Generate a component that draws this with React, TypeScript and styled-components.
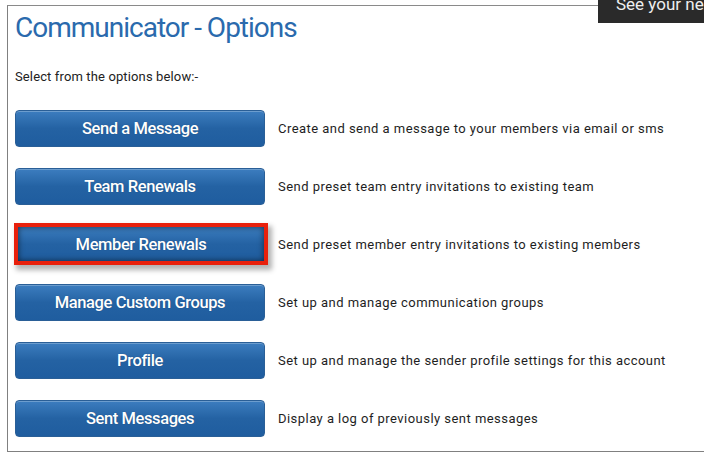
import styled, { createGlobalStyle, css } from "styled-components";

const GlobalStyle = createGlobalStyle`
    html, body { margin: 0; padding: 0; background: #fff; }
    body { font-family: Roboto, "Liberation Sans", sans-serif; color: #222; }
`

const Page = styled.div`
    position: relative; width: 704px; height: 459px; overflow: hidden;
`
const Frame = styled.div`
    margin: 5px 0 0 7px; width: 690px; height: 445px;
    border: 1px solid #808080; border-top-color: #8a8a8a;
    padding: 0 0 0 7px; box-sizing: content-box;
`
const Title = styled.h1`
    margin: 0; padding-top: 5px; font-size: 28px; font-weight: 400; line-height: 34px;
    color: #2a6aad; letter-spacing: -1px;
`
const Intro = styled.p`
    margin: 24px 0 0; font-size: 13px; line-height: 16px; color: #222; letter-spacing: 0.13px;
`
const OptionList = styled.ul`
    list-style: none; margin: 25px 0 0; padding: 0;
    display: flex; flex-direction: column; gap: 21px;
`
const Row = styled.li`
    display: flex; align-items: center; gap: 13px;
`
const Button = styled.button<{ $active?: boolean }>`
    width: 250px; height: 37px; border-radius: 4px; border: 1px solid #2a5f97;
    background: linear-gradient(#3c7dbf, #2462a3 50%, #1f5d9f);
    color: #fff; font-family: inherit; font-size: 16.5px; font-weight: 500; letter-spacing: -0.4px;
    text-shadow: 0 0 1px rgba(0,0,0,.3); cursor: pointer; padding: 0; box-sizing: border-box;
    box-shadow: inset 0 1px 0 rgba(255,255,255,.25);
    ${({ $active }) => $active && css`
        width: 254px; height: 42px; margin: -3px 0 -2px -1px;
        border: 4px solid #e8200c; border-radius: 0;
        box-shadow: inset 0 0 6px rgba(0,0,0,.6), 3px 4px 5px 1px rgba(0,0,0,.3);
    `}
`
const Desc = styled.span<{ $shift?: boolean }>`
    font-size: 13px; color: #1e1e1e; letter-spacing: 0.46px;
    ${({ $shift }) => $shift && css`margin-left: -3px;`}
`
const Tip = styled.div`
    position: absolute; top: -4px; left: 598px; width: 106px; height: 27px;
    background: #2a2a2a; color: #eee; font-size: 17px; line-height: 17px;
    padding-left: 18px; box-sizing: border-box; white-space: nowrap; overflow: hidden;
`

const options = [
    { label: "Send a Message", desc: "Create and send a message to your members via email or sms" },
    { label: "Team Renewals", desc: "Send preset team entry invitations to existing team" },
    { label: "Member Renewals", desc: "Send preset member entry invitations to existing members", active: true },
    { label: "Manage Custom Groups", desc: "Set up and manage communication groups" },
    { label: "Profile", desc: "Set up and manage the sender profile settings for this account" },
    { label: "Sent Messages", desc: "Display a log of previously sent messages" },
]

function App() {
    return (
        <Page>
            <GlobalStyle />
            <Frame>
                <Title>Communicator - Options</Title>
                <Intro>Select from the options below:-</Intro>
                <OptionList>
                    {options.map((o, k) => (
                        <Row key={k}>
                            <Button $active={o.active}>{o.label}</Button>
                            <Desc $shift={o.active}>{o.desc}</Desc>
                        </Row>
                    ))}
                </OptionList>
            </Frame>
            <Tip>See your next</Tip>
        </Page>
    )
}
export default App;
